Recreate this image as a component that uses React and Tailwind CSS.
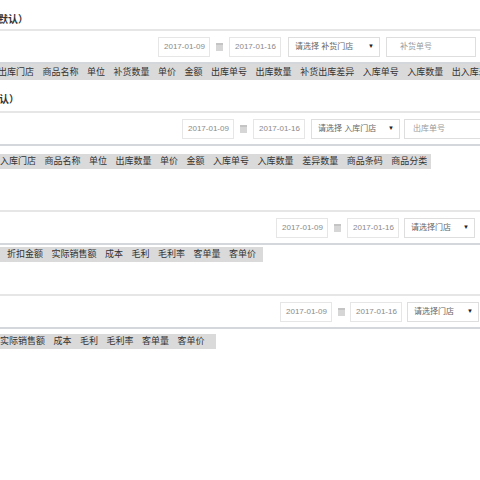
const FONT = "font-['Liberation_Sans','Noto_Sans_CJK_SC',sans-serif]";

function DateBox({ value }) {
  return (
    <div className="w-[52px] h-[20px] shrink-0 border border-[#e6e6e6] bg-white pl-[5px] flex items-center text-[8px] text-[#8a8a8a]">
      {value}
    </div>
  );
}

function CalIcon() {
  return (
    <div className="w-[19px] shrink-0 flex items-center justify-center">
      <div className="w-[7px] h-[8px] bg-[#d6d6d6] border-t-2 border-[#c4c4c4]" />
    </div>
  );
}

function SelectBox({ label, w }) {
  return (
    <div className={`${w} h-[20px] shrink-0 border border-[#dedede] bg-white pl-[6px] pr-[5px] flex items-center justify-between text-[8px] text-[#666]`}>
      <span className="whitespace-nowrap">{label}</span>
      <span className="text-[6px] text-[#222]">▼</span>
    </div>
  );
}

function TextBox({ placeholder, pad, w }) {
  return (
    <div className={`${w} h-[20px] shrink-0 border border-[#dedede] bg-white flex items-center text-[8px] text-[#9a9a9a] ${pad}`}>
      {placeholder}
    </div>
  );
}

function Toolbar({ left, children }) {
  return (
    <div className="h-[35px] border-t-2 border-b-2 border-t-[#e6e6e6] border-b-[#d4d8dc] bg-white flex items-center overflow-hidden">
      <div className={`${left} shrink-0`} />
      {children}
    </div>
  );
}

function HeaderRow({ cols, className }) {
  return (
    <div className={`flex gap-[8.5px] bg-[#dadada] text-[9px] leading-[15px] text-[#333] whitespace-nowrap ${className}`}>
      {cols.map((c) => (
        <span key={c} className="shrink-0">{c}</span>
      ))}
    </div>
  );
}

export default function App() {
  return (
    <div className={`w-[480px] h-[480px] bg-white overflow-hidden ${FONT}`}>
      {/* 补货 */}
      <div className="mt-[13px] h-[14px] leading-[14px] text-[10px] font-bold text-[#333] -ml-[2px]">默认）</div>
      <div className="mt-[2px]">
        <Toolbar left="w-[158px]">
          <DateBox value="2017-01-09" />
          <CalIcon />
          <DateBox value="2017-01-16" />
          <div className="w-[7px] shrink-0" />
          <SelectBox label="请选择  补货门店" w="w-[92px]" />
          <div className="w-[6px] shrink-0" />
          <TextBox placeholder="补货单号" pad="pl-[13px]" w="w-[90px]" />
        </Toolbar>
      </div>
      <HeaderRow
        className="h-[16px] leading-[16px] -ml-[2px] w-[600px]"
        cols={['出库门店', '商品名称', '单位', '补货数量', '单价', '金额', '出库单号', '出库数量', '补货出库差异', '入库单号', '入库数量', '出入库差异']}
      />

      {/* 入库 */}
      <div className="mt-[13px] h-[14px] leading-[14px] text-[10px] font-bold text-[#333] -ml-[1px]">认）</div>
      <div className="mt-[4px]">
        <Toolbar left="w-[182px]">
          <DateBox value="2017-01-09" />
          <CalIcon />
          <DateBox value="2017-01-16" />
          <div className="w-[6px] shrink-0" />
          <SelectBox label="请选择 入库门店" w="w-[89px]" />
          <div className="w-[4px] shrink-0" />
          <TextBox placeholder="出库单号" pad="pl-[8px]" w="w-[90px]" />
        </Toolbar>
      </div>
      <div className="mt-[8px] flex">
        <HeaderRow
          className="pr-[4px]"
          cols={['入库门店', '商品名称', '单位', '出库数量', '单价', '金额', '入库单号', '入库数量', '差异数量', '商品条码', '商品分类']}
        />
      </div>

      {/* 销售 */}
      <div className="mt-[41px]">
        <Toolbar left="w-[276px]">
          <DateBox value="2017-01-09" />
          <CalIcon />
          <DateBox value="2017-01-16" />
          <div className="w-[5px] shrink-0" />
          <SelectBox label="请选择门店" w="w-[71px]" />
        </Toolbar>
      </div>
      <div className="mt-[2px] flex">
        <HeaderRow
          className="pl-[7px] pr-[7px]"
          cols={['折扣金额', '实际销售额', '成本', '毛利', '毛利率', '客单量', '客单价']}
        />
      </div>

      {/* 门店 */}
      <div className="mt-[32px]">
        <Toolbar left="w-[280px]">
          <DateBox value="2017-01-09" />
          <div className="w-[18px] shrink-0 flex items-center justify-center">
            <div className="w-[7px] h-[8px] bg-[#d6d6d6] border-t-2 border-[#c4c4c4]" />
          </div>
          <DateBox value="2017-01-16" />
          <div className="w-[5px] shrink-0" />
          <SelectBox label="请选择门店" w="w-[72px]" />
        </Toolbar>
      </div>
      <div className="mt-[5px] flex">
        <HeaderRow
          className="pr-[11px]"
          cols={['实际销售额', '成本', '毛利', '毛利率', '客单量', '客单价']}
        />
      </div>
    </div>
  );
}
